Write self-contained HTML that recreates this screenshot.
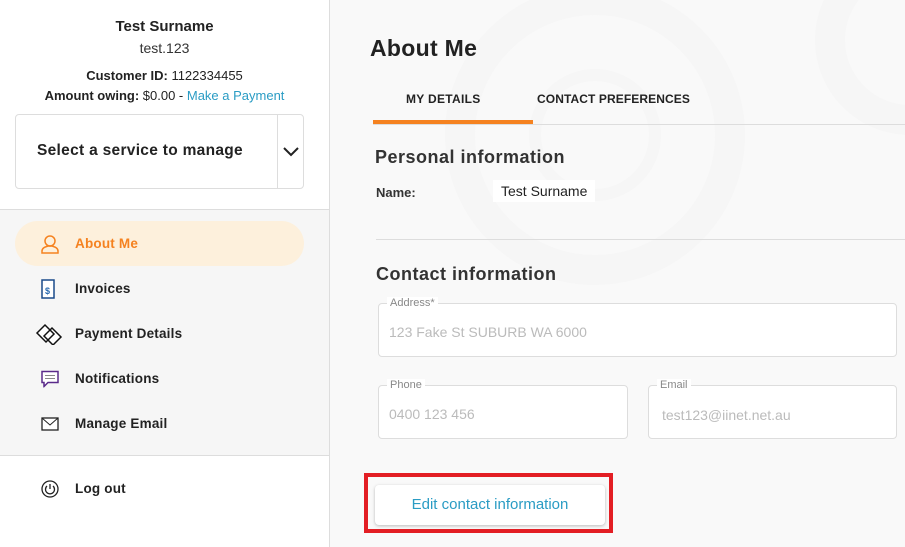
<!DOCTYPE html>
<html><head><meta charset="utf-8"><style>
*{box-sizing:border-box;margin:0;padding:0}
body{width:905px;height:547px;overflow:hidden;font-family:"Liberation Sans",sans-serif;background:#f9f9f9;position:relative;color:#222}
.side{position:absolute;left:0;top:0;width:330px;height:547px;background:#fff;border-right:1px solid #ddd}
.c{text-align:center;position:absolute;left:0;width:329px}
.nav{position:absolute;left:0;top:209px;width:329px;height:247px;background:#f6f6f6;border-top:1px solid #ddd;border-bottom:1px solid #ddd}
.item{position:absolute;left:15px;width:289px;height:45px;font-weight:bold;font-size:13.5px;letter-spacing:.2px;display:flex;align-items:center;padding-left:60px}
.item svg{position:absolute;left:26px;top:50%;transform:translateY(-50%)}
.abs{position:absolute;white-space:nowrap}
.box{position:absolute;border:1px solid #ddd;border-radius:4px;background:#fff}
.lbl{position:absolute;top:-7px;left:8px;background:#fff;font-size:11px;color:#888;padding:0 3px;line-height:12px}
.val{position:absolute;left:10px;font-size:14px;color:#bbb}
</style></head><body>
<svg class="abs" style="left:420px;top:0" width="485" height="547" viewBox="0 0 485 547">
<g fill="none" stroke="#f6f6f6" stroke-width="30">
<circle cx="175" cy="135" r="135"/>
<circle cx="175" cy="135" r="60" stroke-width="12"/>
<circle cx="490" cy="40" r="80"/>
</g></svg>
<div class="side">
<div class="c" style="top:18px;font-weight:bold;font-size:15px">Test Surname</div>
<div class="c" style="top:40px;font-size:14px;color:#333">test.123</div>
<div class="c" style="top:68px;font-size:13px"><b>Customer ID:</b> 1122334455</div>
<div class="c" style="top:88px;font-size:13px"><b>Amount owing:</b> $0.00 - <span style="color:#2a9cc4">Make a Payment</span></div>
<div class="box" style="left:15px;top:114px;width:289px;height:75px">
<div class="abs" style="left:21px;top:27px;font-weight:bold;font-size:15.5px;letter-spacing:.3px">Select a service to manage</div>
<div class="abs" style="left:261px;top:0;height:73px;border-left:1px solid #ddd;width:27px"></div>
<svg class="abs" style="left:267px;top:32px" width="16" height="10"><path d="M1 1l7 7 7-7" fill="none" stroke="#222" stroke-width="2"/></svg>
</div>
</div>
<div class="nav">
<div class="item" style="top:11px;background:#fdf0dc;border-radius:23px;color:#f58220">
<svg width="18" height="20" viewBox="0 0 18 20"><circle cx="9" cy="7" r="5" fill="none" stroke="#f58220" stroke-width="1.5"/><path d="M1 19v-2c0-3 3-4 6-5h4c3 1 6 2 6 5v2z" fill="none" stroke="#f58220" stroke-width="1.5"/></svg>About Me</div>
<div class="item" style="top:56px"><svg width="14" height="20"><rect x="1" y="1" width="12" height="18" fill="#fff" stroke="#1a4a8a" stroke-width="1.5"/><text x="4" y="15" font-size="9" fill="#2a6ab0">$</text></svg>Invoices</div>
<div class="item" style="top:101px"><svg width="28" height="22" style="left:20px"><path d="M2 10l8-8 9 9-8 8z M9 13l8-8 9 9-8 8z" fill="#fff" stroke="#111" stroke-width="1.5"/></svg>Payment Details</div>
<div class="item" style="top:146px"><svg width="18" height="17"><path d="M1 1h16v11H7l-4 4v-4H1z" fill="#fff" stroke="#5a2a8a" stroke-width="1.5"/><path d="M4 5h10M4 8h10" stroke="#888"/></svg>Notifications</div>
<div class="item" style="top:191px"><svg width="18" height="14"><rect x="1" y="1" width="16" height="12" fill="#fff" stroke="#222" stroke-width="1.3"/><path d="M1 1l8 7 8-7" fill="none" stroke="#222"/></svg>Manage Email</div>
</div>
<div class="item" style="top:466px"><svg width="18" height="18"><circle cx="9" cy="9" r="8" fill="none" stroke="#222" stroke-width="1.3"/><path d="M6 6a4.5 4.5 0 1 0 6 0M9 4v5" fill="none" stroke="#222" stroke-width="1.3"/></svg>Log out</div>

<div class="abs" style="left:370px;top:35px;font-weight:bold;font-size:23px;color:#222;letter-spacing:.3px">About Me</div>
<div class="abs" style="left:406px;top:92px;font-weight:bold;font-size:12px;letter-spacing:.3px">MY DETAILS</div>
<div class="abs" style="left:537px;top:92px;font-weight:bold;font-size:12px;letter-spacing:.1px">CONTACT PREFERENCES</div>
<div class="abs" style="left:373px;top:124px;width:532px;height:1px;background:#ddd"></div>
<div class="abs" style="left:373px;top:120px;width:160px;height:4px;background:#f58220"></div>
<div class="abs" style="left:375px;top:147px;font-weight:bold;font-size:18px;color:#333;letter-spacing:.5px">Personal information</div>
<div class="abs" style="left:376px;top:185px;font-weight:bold;font-size:13px;color:#333">Name:</div>
<div class="abs" style="left:493px;top:180px;width:102px;height:22px;background:#fff;padding:3px 0 0 8px;font-size:14px">Test Surname</div>
<div class="abs" style="left:376px;top:239px;width:529px;height:1px;background:#ddd"></div>
<div class="abs" style="left:376px;top:264px;font-weight:bold;font-size:18px;color:#333;letter-spacing:.5px">Contact information</div>
<div class="box" style="left:378px;top:303px;width:519px;height:54px"><div class="lbl">Address*</div><div class="val" style="top:20px">123 Fake St SUBURB WA 6000</div></div>
<div class="box" style="left:378px;top:385px;width:250px;height:54px"><div class="lbl">Phone</div><div class="val" style="top:20px">0400 123 456</div></div>
<div class="box" style="left:648px;top:385px;width:249px;height:54px"><div class="lbl">Email</div><div class="val" style="top:21px;left:13px">test123@iinet.net.au</div></div>
<div class="abs" style="left:364px;top:473px;width:249px;height:60px;border:4px solid #e31e24"></div>
<div class="abs" style="left:375px;top:485px;width:230px;height:40px;background:#fff;border-radius:4px;box-shadow:0 1px 3px rgba(0,0,0,.25);color:#2a9cc4;font-size:15px;text-align:center;line-height:40px">Edit contact information</div>
</body></html>
